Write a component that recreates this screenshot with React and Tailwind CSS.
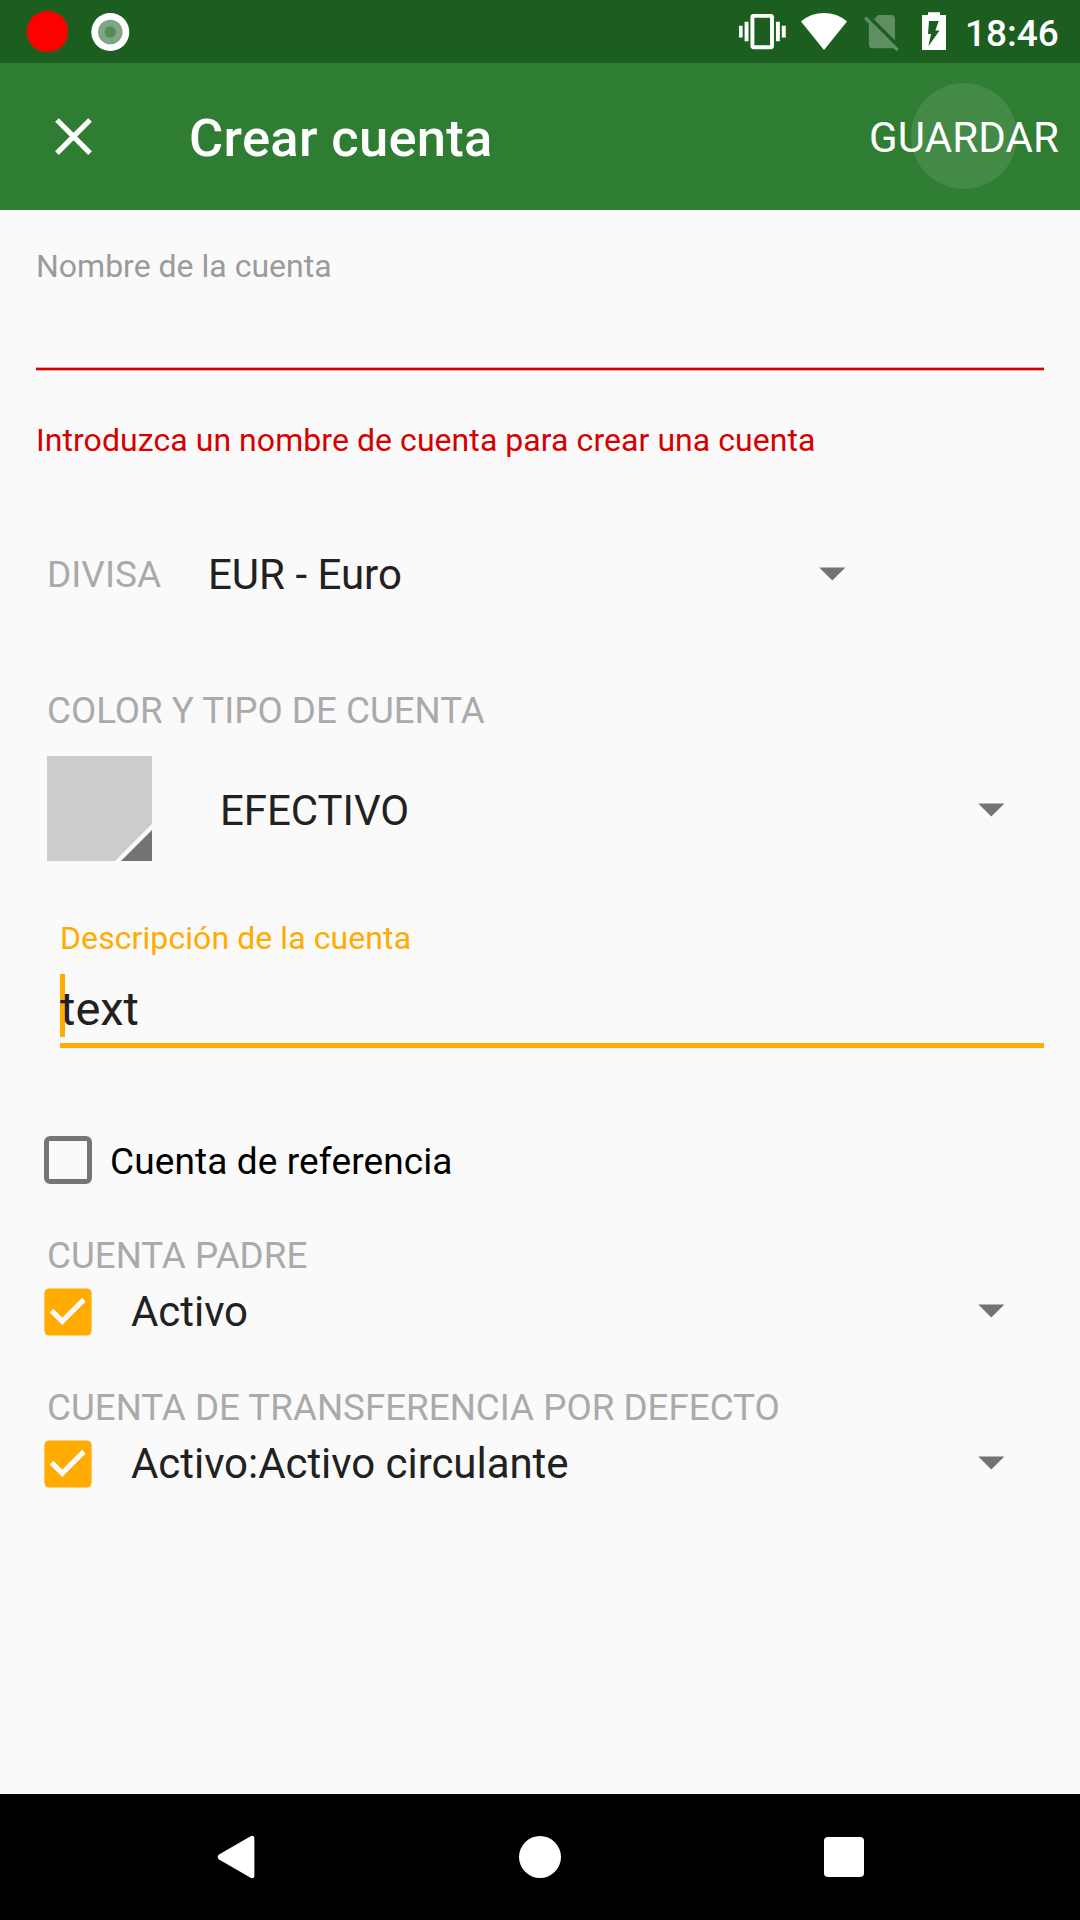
function Text({ className, children }) {
  return <span className={`block whitespace-nowrap ${className}`}>{children}</span>;
}

function DropArrow({ className = "" }) {
  return (
    <svg className={`block shrink-0 ${className}`} width="28" height="14" viewBox="0 0 28 14">
      <path d="M1.2.4h26.200L14.300 13.400z" fill="#737373" />
    </svg>
  );
}

function CheckedBox() {
  return (
    <svg className="block shrink-0" width="48" height="48" viewBox="0 0 48 48">
      <rect x=".4" y=".4" width="47.2" height="47.2" rx="5" fill="#ffab00" />
      <path d="M7.5 22.6l10.7 10.7L39.9 11.6" fill="none" stroke="#fafafa" strokeWidth="5.2" />
    </svg>
  );
}

function StatusBar() {
  return (
    <div className="flex h-[63px] items-center bg-[#1b5e20] pl-[26px] text-white">
      <svg className="block" width="43" height="43" viewBox="0 0 43 43">
        <circle cx="21.5" cy="21.5" r="20.7" fill="#ff0000" />
      </svg>
      <svg className="ml-[21px] block" width="40" height="40" viewBox="0 0 40 40">
        <circle cx="20.3" cy="20" r="19" fill="#fff" />
        <circle cx="20.3" cy="20" r="12.3" fill="#7fa582" />
        <circle cx="20.3" cy="20" r="5.7" fill="#558b59" />
      </svg>
      <svg className="ml-[609px] block" width="47" height="63" viewBox="0 0 47 63">
        <path
          transform="translate(-.3 8) scale(1.96)"
          fill="#fff"
          d="M0 15h2V9H0v6zm3 2h2V7H3v10zm19-8v6h2V9h-2zm-3 8h2V7h-2v10zM16.5 3h-9C6.67 3 6 3.67 6 4.5v15c0 .83.67 1.5 1.5 1.5h9c.83 0 1.5-.67 1.5-1.5v-15c0-.83-.67-1.5-1.5-1.5zM16 19H8V5h8v14z"
        />
      </svg>
      <svg className="ml-[14px] block" width="48" height="63" viewBox="0 0 48 63">
        <path d="M1 21.5A35 35 0 0 1 47 21.5L24 50z" fill="#fff" />
      </svg>
      <svg className="ml-[12px] block" width="44" height="63" viewBox="0 0 44 63">
        <path
          transform="translate(-.4 9.3) scale(1.86)"
          fill="#fff"
          fillOpacity=".3"
          d="M18.99 5c0-1.1-.89-2-1.99-2h-7L7.66 5.34 19 16.68 18.99 5zM3.65 3.88L2.38 5.15 5 7.77V19c0 1.1.9 2 2 2h10.01c.35 0 .67-.1.96-.26l1.88 1.88 1.27-1.27L3.65 3.88z"
        />
      </svg>
      <svg className="ml-[18px] block" width="24" height="63" viewBox="0 0 24 63">
        <path
          fill="#fff"
          fillRule="evenodd"
          d="M6 12.3h12V15h6v35H0V15h6zM7 21L6 34h3L6.4 46.3 17.6 30.4h-4.2L16.7 21z"
        />
      </svg>
      <Text className="ml-[19px] pt-[4px] text-[37px] leading-[60px] font-medium">18:46</Text>
    </div>
  );
}

function AppBar() {
  return (
    <header className="flex h-[147px] items-center bg-[#2e7d32] pr-[21px] pl-[42px] text-white">
      <svg className="block" width="63" height="63" viewBox="0 0 24 24">
        <path
          fill="#fff"
          d="M19 6.41L17.59 5 12 10.59 6.41 5 5 6.41 10.59 12 5 17.59 6.41 19 12 13.41 17.59 19 19 17.59 13.41 12z"
        />
      </svg>
      <h1 className="ml-[84px] grow pt-[3px] text-[52.5px] leading-[62px] font-medium tracking-[0.3px] whitespace-nowrap">
        Crear cuenta
      </h1>
      <button className="relative pt-[2px] text-[42px] leading-[50px] tracking-[0.12px] whitespace-nowrap">
        <span className="absolute -top-[28px] left-[42px] size-[106px] rounded-full bg-white/10" />
        <span className="relative">GUARDAR</span>
      </button>
    </header>
  );
}

function AccountRow({ label, value }) {
  return (
    <section className="h-[152px]">
      <Text className="ml-[11px] h-[54px] text-[36.75px] leading-[44px] text-[#aaaaaa]">{label}</Text>
      <div className="flex h-[48px] items-center pl-[8px]">
        <CheckedBox />
        <Text className="ml-[39px] grow text-[42px] leading-[48px] tracking-[-0.05px] text-[#212121]">
          {value}
        </Text>
        <DropArrow className="mr-[39px] mb-[2px]" />
      </div>
    </section>
  );
}

export default function App() {
  return (
    <div className="flex h-[1920px] w-[1080px] flex-col overflow-hidden bg-[#fafafa] font-[Roboto,sans-serif]">
      <StatusBar />
      <AppBar />
      <main className="flex grow flex-col px-[36px]">
        <Text className="mt-[37px] text-[32px] leading-[38px] text-[#9b9b9b]">Nombre de la cuenta</Text>
        <div className="mt-[82px] h-[4px] border-y border-[#f0a0a0] bg-[#d50000]" />
        <Text className="mt-[50px] text-[32px] leading-[38px] tracking-[0.06px] text-[#d50000]">
          Introduzca un nombre de cuenta para crear una cuenta
        </Text>

        <div className="mt-[90px] flex h-[50px] items-center">
          <Text className="ml-[11px] w-[161px] pt-[2px] text-[37px] leading-[44px] text-[#aaaaaa]">DIVISA</Text>
          <Text className="w-[610px] pt-[2px] text-[42px] leading-[50px] text-[#212121]">EUR - Euro</Text>
          <DropArrow />
        </div>

        <Text className="mt-[90px] ml-[11px] text-[36.75px] leading-[44px] text-[#aaaaaa]">
          COLOR Y TIPO DE CUENTA
        </Text>
        <div className="mt-[23px] flex h-[105px] items-center pl-[11px]">
          <svg className="block" width="105" height="105" viewBox="0 0 105 105">
            <path d="M0 0h105v105H0z" fill="#cccccc" />
            <path d="M105 68v37H68z" fill="#fafafa" />
            <path d="M105 74v31H74z" fill="#737373" />
          </svg>
          <Text className="ml-[68px] grow pt-[5px] text-[42px] leading-[50px] tracking-[-0.05px] text-[#212121]">
            EFECTIVO
          </Text>
          <DropArrow className="mt-[3px] mr-[39px]" />
        </div>

        <Text className="mt-[58px] ml-[24px] text-[32px] leading-[38px] tracking-[0.08px] text-[#ffab00]">
          Descripción de la cuenta
        </Text>
        <div className="mt-[17px] ml-[24px] flex h-[74px] flex-col justify-between border-b-[5px] border-[#ffab00]">
          <div className="h-[63px] border-l-[5px] border-[#ffab00]">
            <Text className="-ml-[5px] text-[47px] leading-[69px] text-[#212121]">text</Text>
          </div>
        </div>

        <div className="mt-[88px] flex h-[48px] items-center pl-[8px]">
          <span className="block size-[48px] rounded-[6px] border-[5px] border-[#757575]" />
          <Text className="ml-[18px] pt-[4px] text-[37px] leading-[44px] tracking-[0.12px] text-black">
            Cuenta de referencia
          </Text>
        </div>

        <div className="mt-[50px]">
          <AccountRow label="CUENTA PADRE" value="Activo" />
          <AccountRow label="CUENTA DE TRANSFERENCIA POR DEFECTO" value="Activo:Activo circulante" />
        </div>
      </main>
      <nav className="flex h-[126px] items-center bg-black pl-[217px]">
        <svg className="block" width="38" height="44" viewBox="0 0 38 44">
          <path d="M33.2 1.4Q37.4-.8 37.4 4v36q0 4.800-4.200 2.600L2 24.600q-2.800-2.600 0-5.200z" fill="#fff" />
        </svg>
        <span className="ml-[264px] block size-[42px] rounded-full bg-white" />
        <span className="ml-[263px] block size-[40px] rounded-[4px] bg-white" />
      </nav>
    </div>
  );
}
